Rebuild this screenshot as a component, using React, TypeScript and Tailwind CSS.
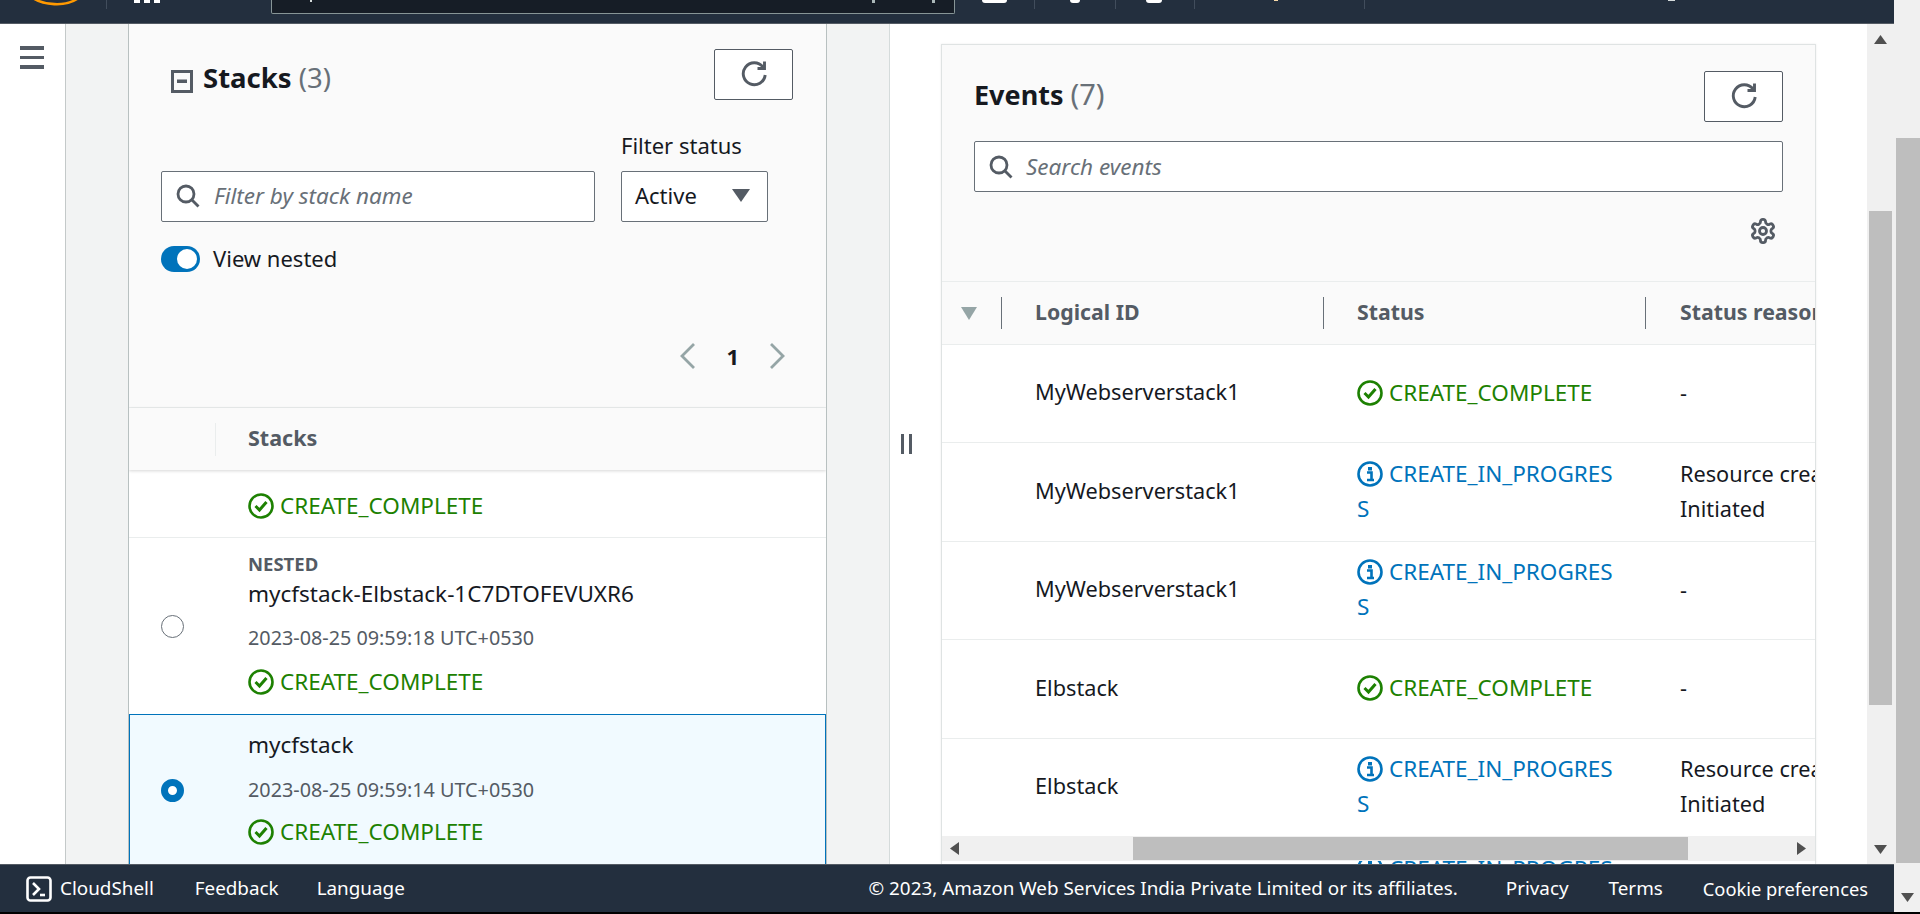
import React from "react";

const font = "font-['Noto_Sans',sans-serif]";

function RefreshIcon() {
  return (
    <svg width="28" height="27" viewBox="0 0 28 27" fill="none" stroke="#545b64" strokeWidth="2.9">
      <path d="M23 6A11 11 0 1 0 25.2 14" />
      <path d="M24.5 0.5V7.5H17.5" />
    </svg>
  );
}

function SearchIcon() {
  return (
    <svg width="24" height="24" viewBox="0 0 24 24" fill="none" stroke="#545b64" strokeWidth="2.8">
      <circle cx="10" cy="10" r="8" />
      <path d="M15.5 15.5L22.5 22.5" />
    </svg>
  );
}

function OkStatus() {
  return (
    <div className="flex items-center gap-[6px] h-[28px] text-[#1d8102] text-[22.5px] leading-[28px]">
      <svg width="26" height="26" viewBox="0 0 26 26" fill="none" stroke="#1d8102" strokeWidth="2.6" className="shrink-0">
        <circle cx="13" cy="13" r="11.5" />
        <path d="M7.5 13l4 4 7-8" strokeWidth="3" />
      </svg>
      <span>CREATE_COMPLETE</span>
    </div>
  );
}

function ProgressStatus() {
  return (
    <div className="text-[#0073bb] text-[22.5px] leading-[35px]">
      <div className="flex items-center gap-[6px]">
        <svg width="26" height="26" viewBox="0 0 26 26" fill="none" className="shrink-0">
          <circle cx="13" cy="13" r="11.5" stroke="#0073bb" strokeWidth="2.6" />
          <rect x="11" y="6" width="4" height="3.5" fill="#0073bb" />
          <path d="M10 11.5h4.5V18M10 19h7" stroke="#0073bb" strokeWidth="2.6" />
        </svg>
        <span>CREATE_IN_PROGRES</span>
      </div>
      <div>S</div>
    </div>
  );
}

function Triangle({ dir, className }: { dir: "up" | "down" | "left" | "right"; className?: string }) {
  const paths = { up: "M0 9L6.5 0L13 9Z", down: "M0 0H13L6.5 9Z", left: "M9 0V13L0 6.5Z", right: "M0 0V13L9 6.5Z" };
  const horizontal = dir === "left" || dir === "right";
  return (
    <svg width={horizontal ? 9 : 13} height={horizontal ? 13 : 9} viewBox={horizontal ? "0 0 9 13" : "0 0 13 9"} className={className}>
      <path d={paths[dir]} fill="#505050" />
    </svg>
  );
}

function Header() {
  return (
    <header className="h-[24px] shrink-0 bg-[#232f3e] border-b border-[#545b64] flex items-start overflow-hidden">
      <svg width="46" height="6" viewBox="0 0 46 6" className="ml-[33px] shrink-0" fill="none">
        <path d="M0 -2C10 5 32 7 44 -1" stroke="#ff9900" strokeWidth="2.6" />
      </svg>
      <div className="w-px h-[9px] bg-[#414d5c] ml-[27px]" />
      <div className="flex gap-[4px] ml-[27px]">
        <div className="w-[6px] h-[3px] bg-white" />
        <div className="w-[6px] h-[3px] bg-white" />
        <div className="w-[6px] h-[3px] bg-white" />
      </div>
      <div className="ml-[111px] w-[684px] h-[14px] bg-[#161d26] border border-t-0 border-[#879596] rounded-b-[2px] flex items-start shrink-0">
        <div className="ml-[38px] w-[2px] h-[2px] bg-[#d5dbdb]" />
        <div className="ml-[560px] w-[3px] h-[3px] bg-[#aab7b8]" />
        <div className="ml-[57px] w-[3px] h-[3px] bg-[#aab7b8]" />
      </div>
      <div className="ml-[27px] w-[25px] h-[3px] bg-white rounded-b-[3px]" />
      <div className="w-px h-[9px] bg-[#414d5c] ml-[27px]" />
      <div className="ml-[35px] w-[10px] h-[3px] bg-white rounded-b-full" />
      <div className="w-px h-[9px] bg-[#414d5c] ml-[35px]" />
      <div className="ml-[30px] w-[16px] h-[3px] bg-white rounded-b-full" />
      <div className="w-px h-[9px] bg-[#414d5c] ml-[32px]" />
      <div className="ml-[79px] w-[4px] h-px bg-[#f8d9a8]" />
      <div className="w-px h-[9px] bg-[#414d5c] ml-[86px]" />
      <div className="ml-[303px] w-[7px] h-px bg-[#d5dbdb]" />
    </header>
  );
}

function LeftNav() {
  return (
    <nav className="w-[66px] shrink-0 bg-white border-r border-[#c4c9c9] pl-[20px] pt-[22px]">
      <div className="w-[24px] flex flex-col gap-[6px]">
        <div className="h-[3.5px] bg-[#545b64]" />
        <div className="h-[3.5px] bg-[#545b64]" />
        <div className="h-[3.5px] bg-[#545b64]" />
      </div>
    </nav>
  );
}

function StacksPanel() {
  return (
    <section className="w-[699px] h-full bg-white border-x border-[#b8c0c0] overflow-hidden flex flex-col">
      <div className="h-[384px] shrink-0 bg-[#fafafa] border-b border-[#eaeded] flex flex-col">
        <div className="flex justify-between pt-[25px] pl-[42px] pr-[33px]">
          <div className="flex items-center mt-[9px] h-[42px]">
            <svg width="22" height="23" viewBox="0 0 22 23" fill="none" className="mt-[5px]">
              <rect x="1.5" y="1.5" width="19" height="20" stroke="#545b64" strokeWidth="3" />
              <rect x="6" y="9.5" width="10" height="3.5" fill="#545b64" />
            </svg>
            <h1 className="ml-[10px] -mt-[2px] text-[27.5px] leading-[34px] font-bold text-[#16191f]">
              Stacks <span className="font-normal text-[#687078]">(3)</span>
            </h1>
          </div>
          <button className="w-[79px] h-[51px] bg-white border border-[#545b64] rounded-[2px] flex items-center justify-center">
            <RefreshIcon />
          </button>
        </div>
        <div className="mt-[31px] pl-[32px] flex items-end gap-[26px]">
          <div className="w-[434px] h-[51px] pb-[2px] bg-white border border-[#687078] rounded-[2px] flex items-center pl-[14px] gap-[14px]">
            <SearchIcon />
            <span className="text-[22.5px] italic text-[#687078]">Filter by stack name</span>
          </div>
          <div>
            <div className="text-[22px] leading-[28px] text-[#16191f] mb-[12px]">Filter status</div>
            <div className="w-[147px] h-[51px] pb-[2px] bg-white border border-[#687078] rounded-[2px] flex items-center justify-between pl-[13px] pr-[17px]">
              <span className="text-[22px] text-[#16191f]">Active</span>
              <svg width="18" height="13" viewBox="0 0 18 13"><path d="M0 0H18L9 13Z" fill="#545b64" /></svg>
            </div>
          </div>
        </div>
        <div className="mt-[24px] pl-[32px] flex items-center gap-[13px] h-[26px]">
          <div className="w-[39px] h-[26px] rounded-full bg-[#0073bb] flex items-center justify-end pr-[3px]">
            <div className="w-[20px] h-[20px] rounded-full bg-white" />
          </div>
          <span className="pb-[2px] text-[22px] text-[#16191f]">View nested</span>
        </div>
        <div className="mt-[70px] flex justify-end items-center pr-[40px] h-[28px]">
          <svg width="18" height="26" viewBox="0 0 18 26" fill="none" stroke="#95a5a6" strokeWidth="2.8"><path d="M15 1L3 13l12 12" /></svg>
          <span className="mx-[29px] text-[22px] font-bold text-[#16191f]">1</span>
          <svg width="18" height="26" viewBox="0 0 18 26" fill="none" stroke="#95a5a6" strokeWidth="2.8"><path d="M3 1l12 12L3 25" /></svg>
        </div>
      </div>
      <div className="h-[62px] shrink-0 bg-[#fafafa] shadow-[0_1px_3px_rgba(0,0,0,0.16)] relative flex items-center">
        <div className="w-px h-[33px] bg-[#eaeded] ml-[86px]" />
        <span className="ml-[32px] pb-[2px] text-[21.5px] font-bold text-[#545b64]">Stacks</span>
      </div>
      <div className="h-[68px] shrink-0 pt-[22px] pl-[119px] border-b border-[#eaeded]">
        <OkStatus />
      </div>
      <div className="h-[176px] shrink-0 pl-[32px] flex items-center">
        <div className="w-[23px] h-[23px] rounded-full bg-white border border-[#687078] shrink-0" />
        <div className="ml-[64px] h-full pt-[14px]">
          <div className="h-[24px] leading-[24px] text-[18.5px] font-bold text-[#545b64]">NESTED</div>
          <div className="mt-[4px] h-[28px] leading-[28px] text-[22.5px] text-[#16191f]">mycfstack-Elbstack-1C7DTOFEVUXR6</div>
          <div className="mt-[18px] h-[24px] leading-[24px] text-[19.8px] text-[#545b64]">2023-08-25 09:59:18 UTC+0530</div>
          <div className="mt-[18px]"><OkStatus /></div>
        </div>
      </div>
      <div className="h-[152px] shrink-0 pl-[31px] flex items-center bg-[#f1faff] border border-[#0073bb]">
        <div className="w-[23px] h-[23px] rounded-full bg-white border-[7px] border-[#0073bb] shrink-0" />
        <div className="ml-[64px] h-full pt-[16px]">
          <div className="h-[28px] leading-[28px] text-[22.5px] text-[#16191f]">mycfstack</div>
          <div className="mt-[19px] h-[24px] leading-[24px] text-[19.8px] text-[#545b64]">2023-08-25 09:59:14 UTC+0530</div>
          <div className="mt-[16px]"><OkStatus /></div>
        </div>
      </div>
    </section>
  );
}

const rows: { id: string; progress: boolean; reason: React.ReactNode }[] = [
  { id: "MyWebserverstack1", progress: false, reason: "-" },
  { id: "MyWebserverstack1", progress: true, reason: <>Resource creation<br />Initiated</> },
  { id: "MyWebserverstack1", progress: true, reason: "-" },
  { id: "Elbstack", progress: false, reason: "-" },
  { id: "Elbstack", progress: true, reason: <>Resource creation<br />Initiated</> },
  { id: "Elbstack", progress: true, reason: "-" },
];

function EventsPanel() {
  return (
    <section className="relative w-[875px] h-full bg-white border-x border-t border-[#dfe3e3] shadow-[0_0_2px_rgba(0,0,0,0.08)] overflow-hidden flex flex-col">
      <div className="h-[236px] shrink-0 bg-[#fafafa] px-[32px] pt-[26px] flex flex-col">
        <div className="flex justify-between">
          <h2 className="text-[27px] leading-[34px] font-bold text-[#16191f] mt-[6px]">
            Events <span className="font-normal text-[29px] text-[#687078]">(7)</span>
          </h2>
          <button className="w-[79px] h-[51px] bg-white border border-[#545b64] rounded-[2px] flex items-center justify-center">
            <RefreshIcon />
          </button>
        </div>
        <div className="mt-[19px] h-[51px] bg-white border border-[#687078] rounded-[2px] flex items-center pl-[14px] gap-[13px]">
          <SearchIcon />
          <span className="text-[22.5px] italic text-[#687078]">Search events</span>
        </div>
        <div className="mt-[25px] flex justify-end pr-[6px]">
          <svg width="28" height="28" viewBox="0 0 24 24" fill="none" stroke="#545b64" strokeWidth="2.4">
            <path d="M12.2 2h-.4a2 2 0 0 0-2 2v.2a2 2 0 0 1-1 1.7l-.4.3a2 2 0 0 1-2 0l-.2-.1a2 2 0 0 0-2.7.7l-.2.4a2 2 0 0 0 .7 2.7l.2.1a2 2 0 0 1 1 1.7v.5a2 2 0 0 1-1 1.8l-.2.1a2 2 0 0 0-.7 2.7l.2.4a2 2 0 0 0 2.7.7l.2-.1a2 2 0 0 1 2 0l.4.3a2 2 0 0 1 1 1.7v.2a2 2 0 0 0 2 2h.4a2 2 0 0 0 2-2v-.2a2 2 0 0 1 1-1.7l.4-.3a2 2 0 0 1 2 0l.2.1a2 2 0 0 0 2.7-.7l.2-.4a2 2 0 0 0-.7-2.7l-.2-.1a2 2 0 0 1-1-1.8v-.5a2 2 0 0 1 1-1.7l.2-.1a2 2 0 0 0 .7-2.7l-.2-.4a2 2 0 0 0-2.7-.7l-.2.1a2 2 0 0 1-2 0l-.4-.3a2 2 0 0 1-1-1.7V4a2 2 0 0 0-2-2z" />
            <circle cx="12" cy="12" r="3" />
          </svg>
        </div>
      </div>
      <div className="h-[64px] shrink-0 bg-[#fafafa] border-y border-[#eaeded] grid grid-cols-[59px_322px_322px_323px] items-center text-[21.3px] font-bold text-[#545b64]">
        <div className="pl-[19px]">
          <svg width="16" height="13" viewBox="0 0 16 13"><path d="M0 0H16L8 13Z" fill="#95a5a6" /></svg>
        </div>
        <div className="border-l border-[#687078] h-[32px] pl-[33px] leading-[30px]">Logical ID</div>
        <div className="border-l border-[#687078] h-[32px] pl-[33px] leading-[30px]">Status</div>
        <div className="border-l border-[#687078] h-[32px] pl-[34px] leading-[30px] whitespace-nowrap">Status reason</div>
      </div>
      <div className="flex-1 min-h-0 overflow-hidden">
        {rows.map((row, i) => (
          <div key={i} className="h-[98.4px] pb-[2px] last:pb-0 border-b border-[#eaeded] grid grid-cols-[59px_322px_322px_323px] items-center text-[21.7px] text-[#16191f]">
            <div />
            <div className="pl-[34px]">{row.id}</div>
            <div className="pl-[34px]">{row.progress ? <ProgressStatus /> : <OkStatus />}</div>
            <div className="pl-[35px] leading-[35px] whitespace-nowrap">{row.reason}</div>
          </div>
        ))}
      </div>
      <div className="absolute left-0 right-0 bottom-[3px] h-[25px] bg-[#f0f0f0] flex items-center">
        <Triangle dir="left" className="ml-[8px]" />
        <div className="ml-[174px] w-[555px] h-[23px] bg-[#bebebe]" />
        <Triangle dir="right" className="ml-[109px]" />
      </div>
    </section>
  );
}

function Footer() {
  return (
    <footer className="h-[48px] shrink-0 bg-[#232f3e] border-t border-[#545b64] flex items-center text-[18.85px] text-white pl-[26px] pr-[26px]">
      <svg width="26" height="26" viewBox="0 0 26 26" fill="none" className="shrink-0">
        <rect x="1.5" y="1.5" width="23" height="23" rx="3" stroke="white" strokeWidth="2.6" />
        <path d="M7 7l6 6-6 6" stroke="white" strokeWidth="2.6" />
        <path d="M14 19h5" stroke="white" strokeWidth="2.6" />
      </svg>
      <span className="ml-[8px]">CloudShell</span>
      <span className="ml-[41px]">Feedback</span>
      <span className="ml-[38px]">Language</span>
      <span className="ml-auto">© 2023, Amazon Web Services India Private Limited or its affiliates.</span>
      <span className="ml-[48px]">Privacy</span>
      <span className="ml-[40px]">Terms</span>
      <span className="ml-[40px] text-[18.3px]">Cookie preferences</span>
    </footer>
  );
}

export default function App() {
  return (
    <div className={`${font} w-[1920px] h-[914px] overflow-hidden flex flex-col bg-[#f0f0f0]`}>
      <div className="h-[912px] flex">
        <div className="w-[1894px] flex flex-col">
          <Header />
          <main className="flex-1 min-h-0 flex bg-white">
            <LeftNav />
            <div className="w-[824px] shrink-0 bg-[#f2f3f3] border-r border-[#d5dbdb] pl-[62px] overflow-hidden">
              <StacksPanel />
            </div>
            <div className="flex-1 min-w-0 flex">
              <div className="w-[51px] shrink-0 flex items-center justify-center gap-[5px] pr-[19px]">
                <div className="w-[3px] h-[20px] bg-[#545b64]" />
                <div className="w-[3px] h-[20px] bg-[#545b64]" />
              </div>
              <div className="pt-[20px] w-[875px] shrink-0">
                <EventsPanel />
              </div>
            </div>
            <div className="w-[27px] bg-[#f0f0f0] flex flex-col items-center shrink-0">
              <Triangle dir="up" className="mt-[11px]" />
              <div className="mt-[167px] w-[23px] h-[494px] bg-[#bebebe]" />
              <Triangle dir="down" className="mt-[140px]" />
            </div>
          </main>
          <Footer />
        </div>
        <div className="w-[26px] bg-[#f0f0f0] flex flex-col items-end">
          <div className="mt-[138px] w-[24px] h-[725px] bg-[#bebebe]" />
          <Triangle dir="down" className="mt-[30px] mr-[6px]" />
        </div>
      </div>
      <div className="h-[2px] bg-black" />
    </div>
  );
}
